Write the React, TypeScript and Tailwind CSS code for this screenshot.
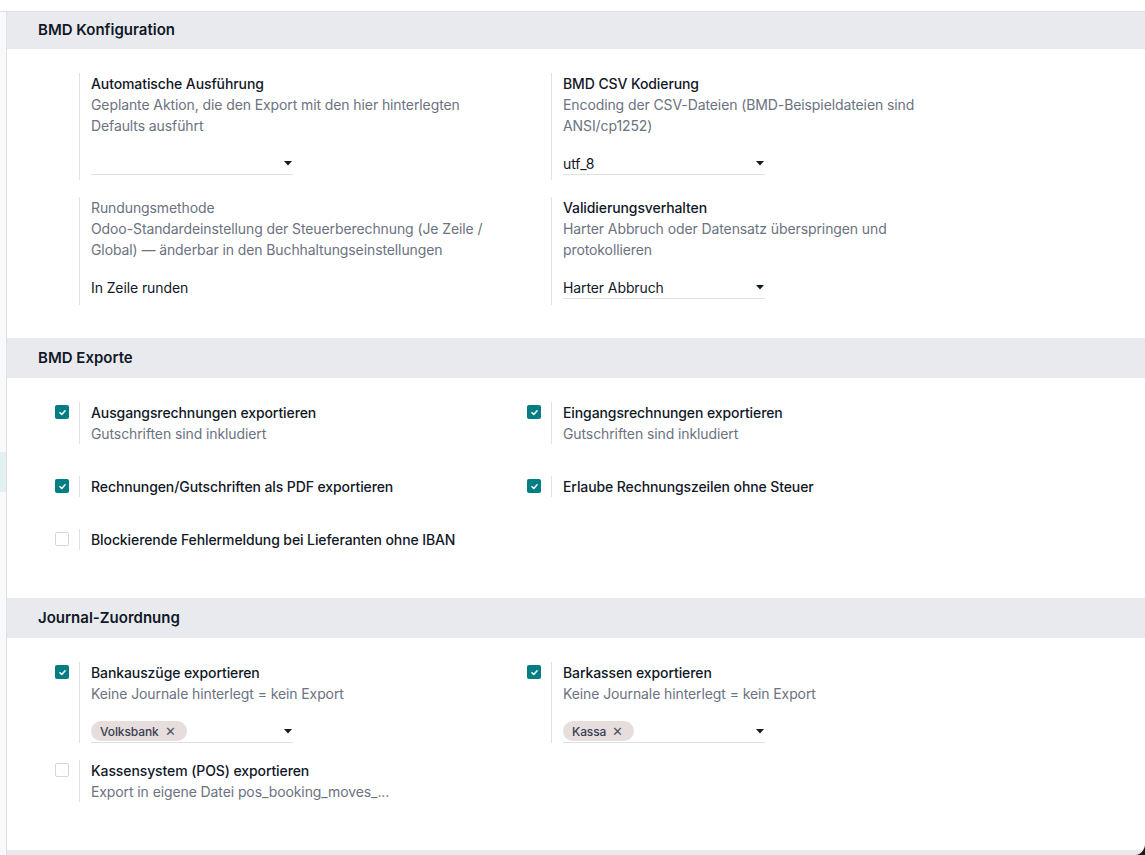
import React from "react";

type Row = {
  checkbox?: boolean | null;
  label: string;
  labelMuted?: boolean;
  desc?: string;
  select?: { value?: string; tags?: string[] };
  readonly?: string;
};

function Checkbox({ checked }: { checked: boolean }) {
  if (checked) {
    return (
      <div className="flex h-[14px] w-[14px] items-center justify-center rounded-[2px] bg-[#017e84]">
        <svg width="9" height="9" viewBox="0 0 10 10" fill="none">
          <path d="M2.2 5.2 4.2 7.1 7.9 3" stroke="#fff" strokeWidth="1.7" strokeLinecap="round" strokeLinejoin="round" />
        </svg>
      </div>
    );
  }
  return <div className="h-[14px] w-[14px] rounded-[2px] border border-[#d4d7db] bg-white" />;
}

function Caret() {
  return (
    <svg width="8" height="5" viewBox="0 0 8 5" className="shrink-0">
      <path d="M0 0h8L4 4.5z" fill="#111827" />
    </svg>
  );
}

function SelectField({ value, tags }: { value?: string; tags?: string[] }) {
  return (
    <div className="mt-[16px] flex h-[23px] w-[202px] items-center justify-between border-b border-[#dee2e6] pr-[1px]">
      <div className="flex items-center gap-1">
        {tags?.map((t) => (
          <span
            key={t}
            className="flex h-[20px] items-center gap-[6px] rounded-full bg-[#e7dddd] pl-[9px] pr-[11px] text-[12px] font-medium text-[#374151]"
          >
            {t}
            <span className="text-[13px] leading-none text-[#4b5563]">✕</span>
          </span>
        ))}
        {value && <span className="text-[14px] text-[#111827]">{value}</span>}
      </div>
      <Caret />
    </div>
  );
}

function Setting({ row }: { row: Row }) {
  return (
    <div className="flex">
      <div className="w-[36px] shrink-0 pl-[12px] pt-[3px]">
        {row.checkbox !== undefined && row.checkbox !== null && <Checkbox checked={row.checkbox} />}
      </div>
      <div className="w-[424px] border-l border-[#dee2e6] pl-[11px] leading-[21px] tracking-[-0.1px]">
        <div className={row.labelMuted ? "text-[14px] text-[#6b7280]" : "text-[14px] font-medium text-[#111827]"}>
          {row.label}
        </div>
        {row.desc && <div className="w-[400px] text-[14px] text-[#6b7280]">{row.desc}</div>}
        {row.readonly && <div className="mt-[16px] flex h-[23px] items-center text-[14px] text-[#111827]">{row.readonly}</div>}
        {row.select && <SelectField value={row.select.value} tags={row.select.tags} />}
        {row.select && <div className={row.select.tags ? "h-0" : "h-[5px]"} />}
        {row.readonly && <div className="h-[6px]" />}
      </div>
    </div>
  );
}

function SectionHeader({ title, tall = true }: { title: string; tall?: boolean }) {
  return (
    <div className={`${tall ? "h-[40px]" : "h-[37px]"} flex items-center bg-[#e9eaee] pl-[31px] text-[15px] font-semibold text-[#111827]`}>
      {title}
    </div>
  );
}

export default function App() {
  const config: Row[] = [
    {
      label: "Automatische Ausführung",
      desc: "Geplante Aktion, die den Export mit den hier hinterlegten Defaults ausführt",
      select: {},
    },
    {
      label: "BMD CSV Kodierung",
      desc: "Encoding der CSV-Dateien (BMD-Beispieldateien sind ANSI/cp1252)",
      select: { value: "utf_8" },
    },
    {
      label: "Rundungsmethode",
      labelMuted: true,
      desc: "Odoo-Standardeinstellung der Steuerberechnung (Je Zeile / Global) — änderbar in den Buchhaltungseinstellungen",
      readonly: "In Zeile runden",
    },
    {
      label: "Validierungsverhalten",
      desc: "Harter Abbruch oder Datensatz überspringen und protokollieren",
      select: { value: "Harter Abbruch" },
    },
  ];

  const exports: Row[] = [
    { checkbox: true, label: "Ausgangsrechnungen exportieren", desc: "Gutschriften sind inkludiert" },
    { checkbox: true, label: "Eingangsrechnungen exportieren", desc: "Gutschriften sind inkludiert" },
    { checkbox: true, label: "Rechnungen/Gutschriften als PDF exportieren" },
    { checkbox: true, label: "Erlaube Rechnungszeilen ohne Steuer" },
    { checkbox: false, label: "Blockierende Fehlermeldung bei Lieferanten ohne IBAN" },
  ];

  const journals: Row[] = [
    {
      checkbox: true,
      label: "Bankauszüge exportieren",
      desc: "Keine Journale hinterlegt = kein Export",
      select: { tags: ["Volksbank"] },
    },
    {
      checkbox: true,
      label: "Barkassen exportieren",
      desc: "Keine Journale hinterlegt = kein Export",
      select: { tags: ["Kassa"] },
    },
    {
      checkbox: false,
      label: "Kassensystem (POS) exportieren",
      desc: "Export in eigene Datei pos_booking_moves_...",
    },
  ];

  return (
    <div className="h-[855px] w-[1145px] overflow-hidden bg-[#1c1c1e]" style={{ fontFamily: "Inter, 'Noto Sans', sans-serif" }}>
      <div className="flex h-full flex-col overflow-hidden rounded-br-[11px] bg-white">
        <div className="h-[12px] shrink-0 border-b border-[#dee2e6] bg-white" />
        <div className="flex min-h-0 flex-1">
          <aside className="flex w-[7px] shrink-0 flex-col border-r border-[#dde0e4] bg-[#f8f9fa]">
            <div className="h-[440px]" />
            <div className="h-[40px] bg-[#e4f1f2]" />
          </aside>
          <main className="min-w-0 flex-1">
            <SectionHeader title="BMD Konfiguration" tall={false} />
            <div className="grid grid-cols-[472px_472px] gap-y-[17px] pb-[33px] pl-[36px] pt-[24px]">
              {config.map((r) => (
                <Setting key={r.label} row={r} />
              ))}
            </div>

            <SectionHeader title="BMD Exporte" />
            <div className="grid grid-cols-[472px_472px] gap-y-[32px] pb-[48px] pl-[36px] pt-[24px]">
              {exports.map((r) => (
                <Setting key={r.label} row={r} />
              ))}
            </div>

            <SectionHeader title="Journal-Zuordnung" />
            <div className="grid grid-cols-[472px_472px] gap-y-[17px] pb-[48px] pl-[36px] pt-[24px]">
              {journals.map((r) => (
                <Setting key={r.label} row={r} />
              ))}
            </div>

            <SectionHeader title="" />
          </main>
        </div>
      </div>
    </div>
  );
}
